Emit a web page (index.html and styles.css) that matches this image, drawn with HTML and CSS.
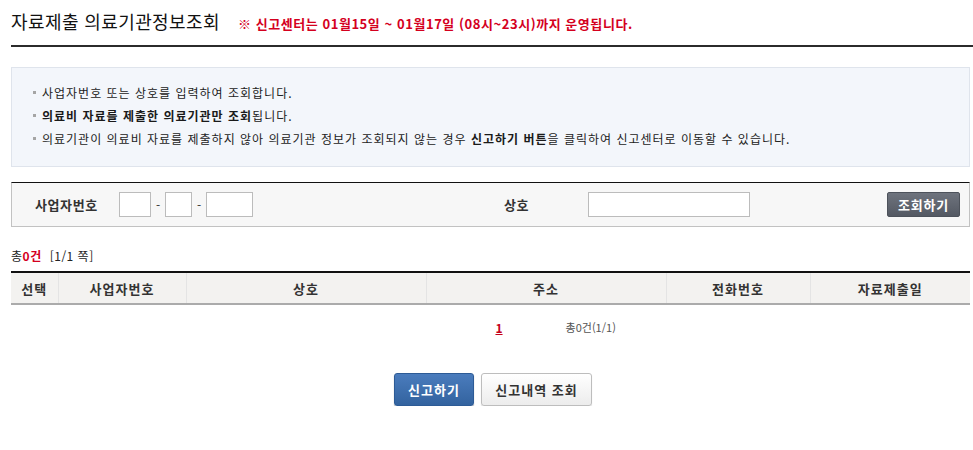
FILE: index.html
```html
<!DOCTYPE html>
<html lang="ko">
<head>
<meta charset="utf-8">
<title>자료제출 의료기관정보조회</title>
<link rel="stylesheet" href="styles.css">
</head>
<body>
<div class="page">
  <div class="head">
    <h1 class="title">자료제출 의료기관정보조회</h1>
    <span class="notice">※ 신고센터는 01월15일 ~ 01월17일 (08시~23시)까지 운영됩니다.</span>
  </div>

  <ul class="info">
    <li>사업자번호 또는 상호를 입력하여 조회합니다.</li>
    <li><b>의료비 자료를 제출한 의료기관만 조회</b>됩니다.</li>
    <li>의료기관이 의료비 자료를 제출하지 않아 의료기관 정보가 조회되지 않는 경우 <b>신고하기 버튼</b>을 클릭하여 신고센터로 이동할 수 있습니다.</li>
  </ul>

  <div class="search">
    <span class="lbl lbl-biz">사업자번호</span>
    <div class="biz">
      <input class="in in1" type="text">
      <span class="dash">-</span>
      <input class="in in2" type="text">
      <span class="dash">-</span>
      <input class="in in3" type="text">
    </div>
    <span class="lbl lbl-name">상호</span>
    <input class="in in-name" type="text">
    <span class="spacer"></span>
    <button class="btn-search" type="button">조회하기</button>
  </div>

  <div class="count">총<b>0건</b><span class="pg">[1/1 쪽]</span></div>

  <table class="list">
    <colgroup>
      <col class="w1"><col class="w2"><col class="w3"><col class="w4"><col class="w5"><col class="w6">
    </colgroup>
    <thead>
      <tr>
        <th class="c1">선택</th>
        <th>사업자번호</th>
        <th>상호</th>
        <th>주소</th>
        <th>전화번호</th>
        <th>자료제출일</th>
      </tr>
    </thead>
  </table>

  <div class="paging">
    <span></span>
    <a class="cur" href="#">1</a>
    <span class="total">총0건(1/1)</span>
  </div>

  <div class="actions">
    <button class="btn btn-blue" type="button">신고하기</button>
    <button class="btn btn-white" type="button">신고내역 조회</button>
  </div>
</div>
</body>
</html>
```

FILE: styles.css
```css
html, body {
  margin: 0;
  padding: 0;
  background: #fff;
}
body {
  font-family: "Noto Sans CJK KR", "Noto Sans", sans-serif;
  font-size: 12px;
  color: #222;
}
.page {
  padding-left: 11px;
}
.head {
  display: flex;
  align-items: baseline;
  padding-top: 9px;
  box-sizing: border-box;
  border-bottom: 2px solid #2b2b2b;
  height: 47px;
}
.title {
  margin: 0;
  font-size: 18px;
  font-weight: normal;
  color: #111;
  line-height: 24px;
  letter-spacing: 0.4px;
}
.notice {
  margin-left: 18px;
  font-size: 13px;
  font-weight: bold;
  color: #d4001e;
  letter-spacing: 0.55px;
}
.info {
  list-style: none;
  margin: 20px 3px 0 0;
  padding: 13px 0 16px 30px;
  background: #f3f6fb;
  border: 1px solid #dfe4ec;
}
.info li {
  position: relative;
  line-height: 23px;
  color: #222;
  letter-spacing: 1px;
}
.info li::before {
  content: "";
  position: absolute;
  left: -9px;
  top: 10px;
  width: 3px;
  height: 3px;
  background: #a5a5a5;
}
.info b {
  color: #1a1a1a;
}
.search {
  margin: 15px 3px 0 0;
  height: 45px;
  box-sizing: border-box;
  display: flex;
  align-items: center;
  background: #f7f7f7;
  border: 1px solid #c2c2c2;
  border-top-color: #111;
}
.lbl {
  font-size: 13px;
  font-weight: bold;
  color: #333;
  letter-spacing: 0.6px;
}
.lbl-biz {
  margin-left: 23px;
  width: 84px;
}
.biz {
  display: flex;
  align-items: center;
  width: 385px;
}
.in {
  height: 25px;
  box-sizing: border-box;
  border: 1px solid #bcbcbc;
  background: #fff;
  padding: 0;
  margin: 0;
}
.in1 { width: 32px; }
.in2 { width: 27px; }
.in3 { width: 47px; }
.dash {
  width: 14px;
  text-align: center;
  color: #333;
}
.lbl-name {
  width: 84px;
}
.in-name {
  width: 162px;
}
.spacer {
  flex: 1;
}
.btn-search {
  width: 73px;
  height: 25px;
  margin-right: 9px;
  border: 1px solid #4d525b;
  border-radius: 2px;
  background: linear-gradient(#6e737d, #545963);
  color: #fff;
  font-family: inherit;
  font-size: 13px;
  font-weight: bold;
  letter-spacing: 0.8px;
  padding: 0;
}
.count {
  margin-top: 18px;
  height: 22px;
  line-height: 22px;
  color: #222;
  letter-spacing: 0.5px;
}
.count b {
  color: #d4001e;
}
.count .pg {
  margin-left: 8px;
}
.list {
  margin-top: 4px;
  width: 959px;
  border-collapse: collapse;
  table-layout: fixed;
  border-top: 2px solid #111;
}
.list .w1 { width: 47px; }
.list .w2 { width: 128px; }
.list .w3 { width: 240px; }
.list .w4 { width: 240px; }
.list .w5 { width: 144px; }
.list .w6 { width: 160px; }
.list th {
  height: 30px;
  padding: 0;
  background: #f3f2f0;
  border-bottom: 2px solid #ababab;
  border-left: 1px solid #e4e4e4;
  font-size: 13px;
  font-weight: bold;
  color: #333;
  text-align: center;
  letter-spacing: 1px;
}
.list th.c1 { border-left: none; }
.paging {
  margin: 12px 3px 0 0;
  display: grid;
  grid-template-columns: 1fr auto 1fr;
  align-items: center;
  height: 20px;
}
.paging .cur {
  margin-left: 17px;
  color: #c4001a;
  font-weight: bold;
  text-decoration: underline;
  font-size: 12px;
}
.paging .total {
  margin-left: 63px;
  color: #555;
  font-size: 11px;
}
.actions {
  margin: 36px 3px 0 0;
  display: flex;
  justify-content: center;
  gap: 7px;
  padding-left: 5px;
}
.btn {
  height: 33px;
  border-radius: 3px;
  font-family: inherit;
  font-size: 13px;
  font-weight: bold;
  letter-spacing: 1px;
  padding: 0;
}
.btn-blue {
  width: 80px;
  border: 1px solid #2d5b96;
  background: linear-gradient(#4a7cbd, #33639f);
  color: #fff;
  box-shadow: 0 1px 1px rgba(0,0,0,0.35);
}
.btn-white {
  width: 111px;
  border: 1px solid #bdbdbd;
  background: linear-gradient(#ffffff, #ececec);
  color: #333;
  box-shadow: 0 1px 1px rgba(0,0,0,0.15);
}
```
